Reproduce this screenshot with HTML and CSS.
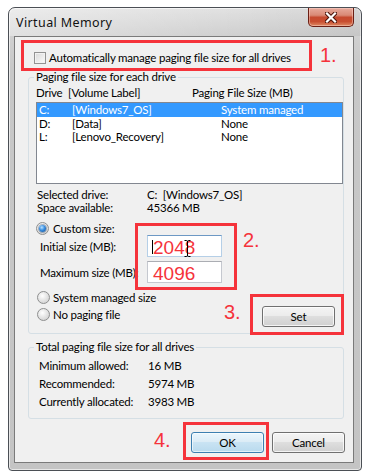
FILE: index.html
```html
<!DOCTYPE html>
<html>
<head>
<meta charset="utf-8">
<title>Virtual Memory</title>
<link rel="stylesheet" href="styles.css">
</head>
<body>
<div class="window">
  <div class="titlebar">
    <span class="title">Virtual Memory</span>
    <div class="close">
      <svg width="12" height="11" viewBox="0 0 12 11">
        <path d="M2 1.5 L10 9.5 M10 1.5 L2 9.5" stroke="#4a1208" stroke-width="4.2" stroke-linecap="square" fill="none"/>
        <path d="M2 1.5 L10 9.5 M10 1.5 L2 9.5" stroke="#ffffff" stroke-width="2.2" stroke-linecap="square" fill="none"/>
      </svg>
    </div>
  </div>
  <div class="client">
    <div class="check-row"><span class="checkbox"></span><span>Automatically manage paging file size for all drives</span></div>

    <div class="group group-drives">
      <div class="group-title">Paging file size for each drive</div>
      <div class="list-head"><span>Drive</span><span>[Volume Label]</span><span>Paging File Size (MB)</span></div>
      <div class="listbox">
        <div class="row sel"><span>C:</span><span>[Windows7_OS]</span><span>System managed</span></div>
        <div class="row"><span>D:</span><span>[Data]</span><span>None</span></div>
        <div class="row"><span>L:</span><span>[Lenovo_Recovery]</span><span>None</span></div>
      </div>
      <div class="info">
        <span>Selected drive:</span><span>C:&nbsp;&nbsp;[Windows7_OS]</span>
        <span>Space available:</span><span>45366 MB</span>
      </div>
      <div class="radio-row custom"><span class="radio on"></span><span>Custom size:</span></div>
      <div class="size-row">
        <span>Initial size (MB):</span>
        <div class="field focus"><span class="caret"></span>2048<svg class="ibeam" width="7" height="17" viewBox="0 0 7 17"><path d="M0.5 0.5 H2.5 Q3.5 0.5 3.5 2 V15 Q3.5 16.5 2.5 16.5 H0.5 M6.5 0.5 H4.5 Q3.5 0.5 3.5 2 M3.5 15 Q3.5 16.5 4.5 16.5 H6.5" stroke="#000" stroke-width="1" fill="none"/></svg></div>
      </div>
      <div class="size-row">
        <span>Maximum size (MB):</span>
        <div class="field">4096</div>
      </div>
      <div class="opts-row">
        <div class="opts">
          <div class="radio-row"><span class="radio"></span><span>System managed size</span></div>
          <div class="radio-row"><span class="radio"></span><span>No paging file</span></div>
        </div>
        <div class="btn set">Set</div>
      </div>
    </div>

    <div class="group group-total">
      <div class="group-title">Total paging file size for all drives</div>
      <div class="totals">
        <span>Minimum allowed:</span><span>16 MB</span>
        <span>Recommended:</span><span>5974 MB</span>
        <span>Currently allocated:</span><span>3983 MB</span>
      </div>
    </div>

    <div class="buttons">
      <div class="btn default">OK</div>
      <div class="btn">Cancel</div>
    </div>
  </div>
</div>

<div class="ann-box b1"></div>
<div class="ann-box b2"></div>
<div class="ann-box b3"></div>
<div class="ann-box b4"></div>
<span class="ann-num n1">1.</span>
<span class="ann-num n2">2.</span>
<span class="ann-num n3">3.</span>
<span class="ann-num n4">4.</span>
</body>
</html>
```

FILE: styles.css
```css
* { box-sizing: border-box; }
html, body { margin: 0; padding: 0; }
body {
  background: #ffffff;
  position: relative;
  width: 370px;
  height: 475px;
  overflow: hidden;
  padding: 7px 0 0 8px;
  font-family: Lato, "Noto Sans", sans-serif;
  font-size: 11.5px;
  letter-spacing: -0.2px;
  color: #000;
}

.window {
  width: 354px;
  height: 464px;
  border: 1px solid #4b4f55;
  border-radius: 7px 7px 4px 4px;
  background: linear-gradient(to bottom, #e2e2e2 0, #d0d0d0 28px, #c8c8c8 60px, #c4c4c4 100%);
  box-shadow: inset 0 0 0 1px rgba(255, 255, 255, 0.6);
  display: flex;
  flex-direction: column;
  overflow: hidden;
}

.titlebar {
  height: 28px;
  flex: none;
  display: flex;
  justify-content: space-between;
  align-items: flex-start;
  padding-left: 7px;
  background: linear-gradient(to right, rgba(255,255,255,0.35), rgba(255,255,255,0) 60%, rgba(0,0,0,0.05));
  border-radius: 6px 6px 0 0;
}
.title {
  margin-top: 7px;
  line-height: 15px;
  font-family: "Noto Sans", Lato, sans-serif;
  font-size: 12.5px;
  letter-spacing: 0.4px;
  color: #111;
}
.close {
  width: 46px;
  height: 19px;
  margin-right: 7px;
  border: 1px solid #6b1f14;
  border-top: none;
  border-radius: 0 0 5px 5px;
  background: linear-gradient(to bottom, #e7a99b 0%, #d98a76 40%, #c64a2f 52%, #c84e30 75%, #de8a63 100%);
  box-shadow: inset 0 0 0 1px rgba(255, 220, 210, 0.45);
  display: flex;
  align-items: center;
  justify-content: center;
}

.client {
  flex: none;
  height: 427px;
  margin: 0 7px 7px 5px;
  border: 1px solid #7a7a7a;
  background: #f0f0f0;
  overflow: hidden;
}

.check-row {
  display: flex;
  align-items: center;
  gap: 3px;
  margin: 14px 0 0 19px;
  height: 13px;
  line-height: 13px;
}
.checkbox {
  width: 12px;
  height: 12px;
  border: 1px solid #939393;
  background: linear-gradient(135deg, #d9d9d9, #fbfbfb);
  box-shadow: inset 0 0 0 1px #f2f2f2;
}

.group {
  margin: 13px 9px 0 13px;
  border: 1px solid #d5dfe5;
  border-radius: 3px;
}
.group-drives { padding-bottom: 6px; }
.group-total { padding-bottom: 7px; }
.group-title {
  width: fit-content;
  margin: -8px 0 0 5px;
  padding: 0 2px;
  height: 14px;
  line-height: 14px;
  background: #f0f0f0;
}

.list-head {
  display: grid;
  grid-template-columns: 32px 124px auto;
  margin: 2px 0 0 7px;
  height: 14px;
  line-height: 14px;
}
.listbox {
  margin: 2px 0 0 7px;
  height: 82px;
  border: 1px solid #828790;
  background: #ffffff;
}
.row {
  display: grid;
  grid-template-columns: 33px 149px auto;
  padding-left: 2px;
  height: 13px;
  line-height: 13px;
}
.row.sel {
  height: 14px;
  line-height: 14px;
  background: #3399ff;
  color: #ffffff;
}

.info {
  display: grid;
  grid-template-columns: 110px auto;
  margin: 4px 0 0 8px;
  line-height: 13px;
}

.radio-row {
  display: flex;
  align-items: center;
  gap: 3px;
  height: 13px;
  line-height: 13px;
}
.custom { margin: 8px 0 0 7px; gap: 4px; }
.radio {
  width: 13px;
  height: 13px;
  flex: none;
  border-radius: 50%;
  border: 1px solid #8e8f8f;
  background: radial-gradient(circle at 40% 35%, #ffffff 0%, #e6e6e6 45%, #c9c9c9 100%);
  display: flex;
  align-items: center;
  justify-content: center;
}
.radio.on::after {
  content: "";
  width: 7px;
  height: 7px;
  border-radius: 50%;
  background: radial-gradient(circle at 40% 35%, #b9e2ff 0%, #3a8ee0 45%, #0d4a8c 100%);
  box-shadow: 0 0 0 1px rgba(30, 60, 100, 0.35);
}

.size-row {
  display: grid;
  grid-template-columns: 107px 75px;
  align-items: center;
  margin-left: 11px;
  height: 22px;
  white-space: nowrap;
}
.size-row + .size-row { margin-top: 4px; }
.field {
  position: relative;
  height: 22px;
  border: 1px solid #c5c8cf;
  border-top-color: #abadb3;
  background: #ffffff;
  padding: 3px 0 0 5px;
  font-family: "Liberation Sans", Arial, sans-serif;
  font-size: 19px;
  letter-spacing: 0;
  line-height: 18px;
  color: #f5333b;
  white-space: nowrap;
}
.field.focus {
  border-color: #b5cfe7;
  border-top-color: #6d98c4;
}
.caret {
  display: inline-block;
  width: 1px;
  height: 14px;
  background: #000;
  margin-left: -1px;
  vertical-align: 0;
}
.ibeam {
  position: absolute;
  left: 36px;
  top: 4px;
}

.opts-row {
  display: flex;
  justify-content: space-between;
  align-items: flex-end;
}
.opts {
  display: flex;
  flex-direction: column;
  gap: 4px;
  margin: 8px 0 0 8px;
  padding-bottom: 6px;
}

.btn {
  width: 73px;
  height: 21px;
  border: 1px solid #707070;
  border-radius: 3px;
  background: linear-gradient(to bottom, #f4f4f4 0%, #ececec 45%, #dedede 50%, #d0d0d0 100%);
  box-shadow: inset 0 0 0 1px rgba(255, 255, 255, 0.75);
  display: flex;
  align-items: center;
  justify-content: center;
  line-height: 14px;
}
.set { margin-right: 8px; }
.btn.default {
  border-color: #3c7fb1;
  background: linear-gradient(to bottom, #eaf6fd 0%, #dcecf6 45%, #c9e3f3 50%, #b9daee 100%);
  box-shadow: inset 0 0 0 1px rgba(255, 255, 255, 0.6);
}

.totals {
  display: grid;
  grid-template-columns: 109px auto;
  margin: 3px 0 0 10px;
  line-height: 18px;
  white-space: nowrap;
}

.buttons {
  display: flex;
  justify-content: flex-end;
  gap: 8px;
  margin: 13px 8px 0 0;
}

.ann-box {
  position: absolute;
  border: 3px solid #f5333b;
}
.b1 { left: 21px; top: 40px; width: 291px; height: 31px; }
.b2 { left: 135px; top: 223px; width: 102px; height: 67px; }
.b3 { left: 250px; top: 294px; width: 94px; height: 41px; }
.b4 { left: 183px; top: 422px; width: 86px; height: 38px; }

.ann-num {
  position: absolute;
  font-family: "Liberation Sans", Arial, sans-serif;
  font-size: 20px;
  letter-spacing: 0;
  line-height: 20px;
  color: #f5333b;
}
.n1 { left: 320px; top: 45px; }
.n2 { left: 243px; top: 230px; }
.n3 { left: 224px; top: 302px; }
.n4 { left: 154px; top: 430px; }
```
